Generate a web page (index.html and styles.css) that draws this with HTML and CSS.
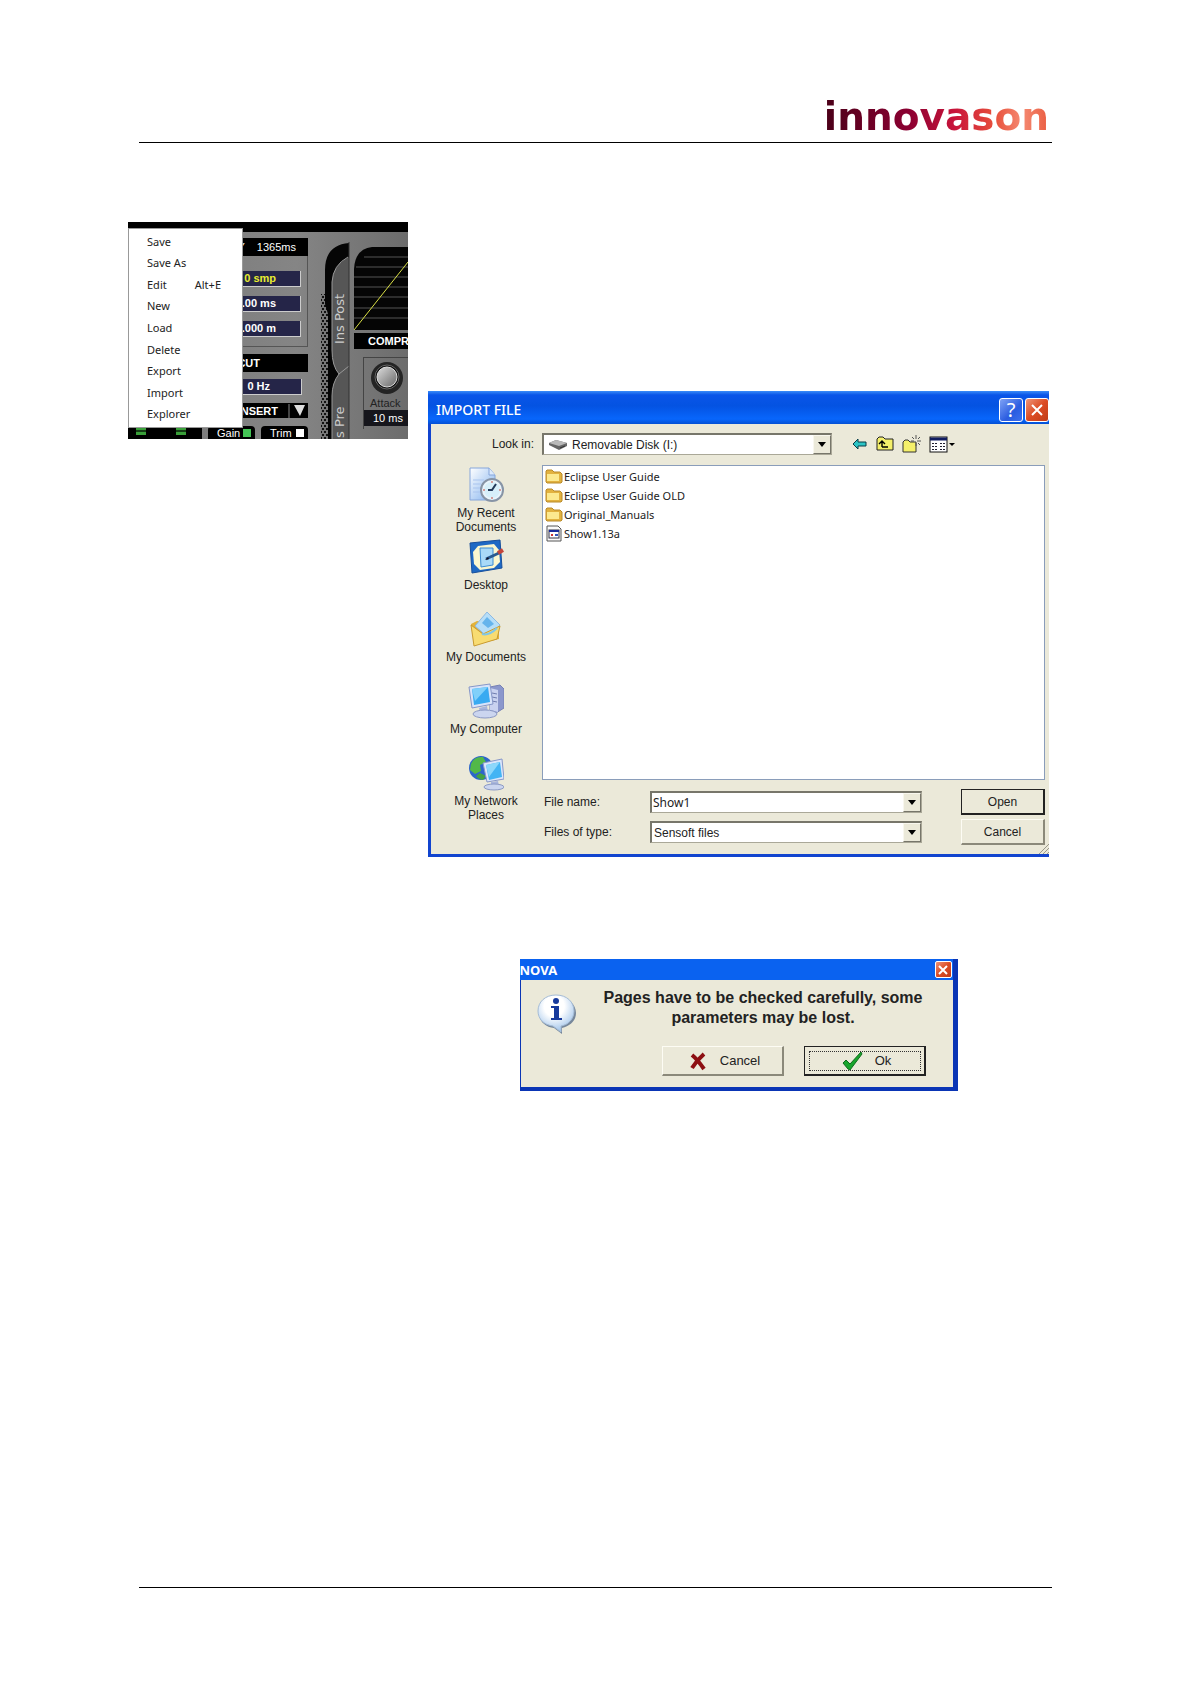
FILE: index.html
```html
<!DOCTYPE html>
<html lang="en">
<head>
<meta charset="utf-8">
<title>Innovason – Importing a show file</title>
<link rel="stylesheet" href="styles.css">
</head>
<body>
<div class="page">
  <header class="page-header"><div class="logo">innovason</div></header>

  <main class="figures">
    <section class="console" aria-label="Console file menu">
      <div class="console-top"></div>
      <div class="console-body">
        <div class="channel">
          <div class="strip strip-delay"><span>DELAY</span><span>1365ms</span></div>
          <div class="delay-box">
            <div class="value value-active">0 smp</div>
            <div class="value">00.00 ms</div>
            <div class="value">0.000 m</div>
          </div>
          <div class="strip strip-cut">CUT</div>
          <div class="cut-box"><div class="value value-hz">0 Hz</div></div>
          <div class="strip strip-insert"><span>INSERT</span>
            <svg width="20" height="14" viewBox="0 0 20 14"><path d="M3 0v14" stroke="#888"/><path d="M8 1h11l-5 11z" fill="#ddd"/></svg>
          </div>
          <div class="leds">
            <div class="meter"><i></i><i></i></div>
            <div class="led-button led-gain">Gain<b class="led led-on"></b></div>
            <div class="led-button">Trim<b class="led"></b></div>
          </div>
        </div>
        <svg class="tabs" width="46" height="207" viewBox="0 0 46 207">
          <defs><pattern id="mesh" width="4" height="6" patternUnits="userSpaceOnUse"><rect width="4" height="6" fill="#777"/><path d="M0 1h2v2H0zM2 4h2v2H2z" fill="#111"/></pattern></defs>
          <rect x="13" y="62" width="8" height="145" fill="url(#mesh)"/>
          <path d="M41 11Q17 13 17 38V72L20 82V207H41z" fill="#050505"/>
          <path d="M41 25Q25 33 24 50V118Q24 134 31 142Q24 151 24 164V207H41z" fill="#565656"/>
          <path d="M40 25Q25 33 24 50V118Q24 134 31 142Q24 151 24 164V207M31 142L41 134" fill="none" stroke="#999"/>
          <path d="M41 10V207" stroke="#333"/>
          <text transform="translate(36 112) rotate(-90)" class="tab-text">Ins Post</text>
          <text transform="translate(36 206) rotate(-90)" class="tab-text">s Pre</text>
        </svg>
        <div class="comp">
          <svg class="curve" width="54" height="83" viewBox="0 0 54 83">
            <path d="M0 83V22Q1 2 18 0H54V83z" fill="#050505"/>
            <path d="M10 10H54M2 20H54M0 30H54M0 40H54M0 50H54M0 61H54M0 71H54" stroke="#555"/>
            <path d="M0 83L54 15" stroke="#d9df45"/>
          </svg>
          <div class="strip strip-comp">COMPR</div>
          <div class="knob-box">
            <svg width="36" height="38" viewBox="0 0 36 38">
              <defs><linearGradient id="knob" x2="1" y2="1"><stop stop-color="#ddd"/><stop offset="1" stop-color="#666"/></linearGradient></defs>
              <circle cx="18" cy="20" r="16" fill="#242424"/><circle cx="18" cy="19" r="12" fill="#101010" stroke="#666"/>
              <circle cx="18" cy="19" r="10" fill="url(#knob)" stroke="#ddd"/>
            </svg>
            <div class="knob-label">Attack</div>
            <div class="knob-value">10 ms</div>
          </div>
        </div>
      </div>
      <ul class="menu">
        <li><button type="button">Save</button></li>
        <li><button type="button">Save As</button></li>
        <li><button type="button">Edit<span class="key">Alt+E</span></button></li>
        <li><button type="button">New</button></li>
        <li><button type="button">Load</button></li>
        <li><button type="button">Delete</button></li>
        <li><button type="button">Export</button></li>
        <li><button type="button">Import</button></li>
        <li><button type="button">Explorer</button></li>
      </ul>
    </section>

    <div class="dialogs">
      <section class="import" aria-label="Import file">
        <div class="import-title">
          <h1>IMPORT FILE</h1>
          <button type="button" class="caption-button help" aria-label="Help">?</button>
          <button type="button" class="caption-button close" aria-label="Close"><svg width="14" height="14" viewBox="0 0 14 14"><path d="M2 2L12 12M12 2L2 12" stroke="#fff" stroke-width="2"/></svg></button>
        </div>
        <div class="import-body">
          <label class="look-label" for="look">Look in:</label>
          <div class="look-row">
            <div class="combo combo-look">
              <svg class="disk" width="20" height="12" viewBox="0 0 20 12"><path d="M1 4L8 1L19 4V7L11 11L1 6z" fill="#666"/><path d="M1 4L8 1L19 4L11 7z" fill="#b9b9b9"/><path d="M12 9l5-2" stroke="#333"/></svg>
              <select id="look"><option>Removable Disk (I:)</option></select>
              <span class="drop"></span>
            </div>
            <div class="tools">
              <button type="button" aria-label="Back"><svg width="16" height="12" viewBox="0 0 16 12"><path d="M1 6L6 1V4H14V8H6V11z" fill="#2cc5c5" stroke="#063c46"/></svg></button>
              <button type="button" aria-label="Up one level"><svg width="18" height="16" viewBox="0 0 18 16"><path d="M1 14V3L3 1H7L9 3H17V14z" fill="#f5f06a" stroke="#222"/><path d="M6 11V6M3 8L6 5L9 8M6 11H12" fill="none" stroke="#000" stroke-width="1.4"/></svg></button>
              <button type="button" aria-label="New folder"><svg width="19" height="18" viewBox="0 0 19 18"><path d="M1 17V7L3 5H6L8 7H14V17z" fill="#f5f06a" stroke="#333"/><path d="M14 0V4M10 2L12 4M18 2L16 4M15 6H19M16 8L18 10M14 8V11M9 6H12" stroke="#555"/></svg></button>
              <button type="button" aria-label="Views"><svg width="26" height="17" viewBox="0 0 26 17"><rect x="1" y="1" width="17" height="15" fill="#fff" stroke="#111"/><path d="M1 3H18" stroke="#101c60" stroke-width="3"/><path d="M3 7.500H8M11 7.500H16M3 10.500H8M11 10.500H16M3 13.500H8M11 13.500H16" stroke="#223" stroke-dasharray="2 1"/><path d="M20 7H26L23 10z" fill="#000"/></svg></button>
            </div>
          </div>
          <nav class="places" aria-label="Places">
            <a href="#recent"><svg width="36" height="36" viewBox="0 0 36 36"><defs><linearGradient id="sheet" x2="1" y2="1"><stop stop-color="#fff"/><stop offset="1" stop-color="#7fb0ee"/></linearGradient></defs><path d="M2 1H21L27 8V33H2z" fill="url(#sheet)" stroke="#86a6da"/><path d="M21 1V8H27" fill="#dceafc" stroke="#86a6da"/><path d="M5 13H16M5 17H13M5 21H12M5 25H13" stroke="#a9c4ee"/><circle cx="24" cy="23" r="11" fill="#e9f4fb" stroke="#8794a6" stroke-width="2"/><circle cx="24" cy="23" r="8" fill="#d7effa"/><path d="M28 17L24 23H20" fill="none" stroke="#233a5a" stroke-width="2"/><path d="M24 14V16M24 30V32M15 23H17M31 23H33" stroke="#c74b3c"/></svg>My Recent<br>Documents</a>
            <a href="#desktop"><svg width="36" height="36" viewBox="0 0 36 36"><path d="M2 4L32 1L34 29L4 34z" fill="#1e69c4" stroke="#174f9c"/><path d="M10 7L26 5L31 11L32 23L26 29L12 31L6 25L5 13z" fill="#fbf7cf"/><path d="M12 9H25V26L13 28z" fill="#a9daf8" stroke="#3c8cd4"/><path d="M18 20L31 14" stroke="#295b91" stroke-width="3"/><path d="M30 14L35 11" stroke="#c4453a" stroke-width="4"/><path d="M17 21l3-3 1 2z" fill="#112"/></svg>Desktop</a>
            <a href="#documents"><svg width="36" height="36" viewBox="0 0 36 36"><path d="M3 13L9 10L31 12L31 28L6 34z" fill="#e3b33a"/><path d="M7 15L19 1L32 14L22 28z" fill="#b6def8" stroke="#8db9e2"/><path d="M14 12L19 6L26 13L20 17z" fill="#65b4ec"/><path d="M3 14L15 23L32 15L29 28L6 35z" fill="#f8dc72" stroke="#c99b31"/><path d="M14 23Q21 25 29 17" fill="none" stroke="#80c7e9" stroke-width="2"/></svg>My Documents</a>
            <a href="#computer"><svg width="36" height="36" viewBox="0 0 36 36"><path d="M22 4L32 2L36 6V25L28 30L22 27z" fill="#8b97cc" stroke="#7781b5"/><path d="M22 5L30 7V29L22 27z" fill="#c9d2f0"/><path d="M24 10l5 1M24 14l5 1M24 18l5 1" stroke="#6f7dae"/><path d="M1 4L22 1L25 21L4 25z" fill="#d8e4fa" stroke="#8797c8"/><path d="M4 6L20 4L22 19L6 22z" fill="#38aaf1"/><path d="M4 6L20 4L7 18z" fill="#80d0fa"/><path d="M11 25L19 23L20 29L12 30z" fill="#a8b5dc"/><ellipse cx="17" cy="31" rx="12" ry="4" fill="#cbd5ef" stroke="#8b99c4"/></svg>My Computer</a>
            <a href="#network"><svg width="36" height="36" viewBox="0 0 36 36"><circle cx="13" cy="13" r="12" fill="#2d66ca"/><path d="M3 9Q6 1 15 2L18 7L12 10L13 16L7 19L2 15z" fill="#52b848"/><path d="M12 18L18 21L15 25Q10 24 8 21z" fill="#43a243"/><path d="M15 8L34 4L36 24L19 27z" fill="#dbe6fb" stroke="#8797c8"/><path d="M18 10L32 7L34 22L21 25z" fill="#43b4f4"/><path d="M18 10L32 7L21 22z" fill="#8cd7fb"/><path d="M23 27L30 26L31 31H23z" fill="#a8b5dc"/><ellipse cx="26" cy="32" rx="10" ry="3" fill="#cbd5ef" stroke="#8b99c4"/></svg>My Network<br>Places</a>
          </nav>
          <ul class="files">
            <li><svg class="folder" width="18" height="15" viewBox="0 0 18 15"><path d="M1 13V2L2 1H7L9 3H15L17 5V13L16 14H2z" fill="#e2b23f" stroke="#b98a2b"/><path d="M2 5H14V12H2z" fill="#fce98f"/></svg>Eclipse User Guide</li>
            <li><svg class="folder" width="18" height="15" viewBox="0 0 18 15"><path d="M1 13V2L2 1H7L9 3H15L17 5V13L16 14H2z" fill="#e2b23f" stroke="#b98a2b"/><path d="M2 5H14V12H2z" fill="#fce98f"/></svg>Eclipse User Guide OLD</li>
            <li><svg class="folder" width="18" height="15" viewBox="0 0 18 15"><path d="M1 13V2L2 1H7L9 3H15L17 5V13L16 14H2z" fill="#e2b23f" stroke="#b98a2b"/><path d="M2 5H14V12H2z" fill="#fce98f"/></svg>Original_Manuals</li>
            <li><svg width="18" height="17" viewBox="0 0 18 17"><path d="M2 1H13L16 4V16H2z" fill="#fafafa" stroke="#555"/><rect x="4" y="5" width="10" height="8" fill="#fff" stroke="#334"/><path d="M4 6H14" stroke="#1a2b9b" stroke-width="2"/><path d="M6 9h2v2H6z" fill="#c33"/><path d="M10 9h3v2h-3z" fill="#35b"/></svg>Show1.13a</li>
          </ul>
          <form class="fields">
            <label for="filename">File name:</label>
            <div class="combo combo-name"><input id="filename" type="text" value="Show1"><span class="drop"></span></div>
            <button type="button" class="push push-default">Open</button>
            <label for="filetype">Files of type:</label>
            <div class="combo"><select id="filetype"><option>Sensoft files</option></select><span class="drop"></span></div>
            <button type="button" class="push">Cancel</button>
          </form>
          <svg class="grip" width="12" height="12" viewBox="0 0 12 12"><path d="M2 12L12 2M6 12L12 6M10 12L12 10" stroke="#9a988a"/></svg>
        </div>
      </section>

      <section class="nova" aria-label="NOVA">
        <div class="nova-title">
          <h2>NOVA</h2>
          <button type="button" class="caption-button close close-small" aria-label="Close"><svg width="12" height="12" viewBox="0 0 12 12"><path d="M2 2L10 10M10 2L2 10" stroke="#fff" stroke-width="2"/></svg></button>
        </div>
        <div class="nova-body">
          <svg class="info" width="40" height="40" viewBox="0 0 40 40">
            <defs><radialGradient id="bubble" cx=".45" cy=".3" r=".7"><stop offset=".4" stop-color="#fff"/><stop offset="1" stop-color="#9fc3ea"/></radialGradient></defs>
            <path d="M20 3C31 3 39 10 39 19C39 27 33 32 25 34V40L17 34C8 33 2 27 2 19C2 10 9 3 20 3z" fill="#76879b"/>
            <path d="M19 1C30 1 37 8 37 17C37 25 31 31 24 32V38L16 32C7 31 1 25 1 17C1 8 8 1 19 1z" fill="url(#bubble)" stroke="#a5bcd6"/>
            <circle cx="19" cy="7" r="3" fill="#173a9c"/><path d="M14 12H22V24H25V26H14V24H17V14H14z" fill="#173a9c"/>
          </svg>
          <p>Pages have to be checked carefully, some<br>parameters may be lost.</p>
          <div class="nova-buttons">
            <button type="button" class="push"><svg width="20" height="20" viewBox="0 0 20 20"><path d="M4 4Q9 8 16 18M16 3Q9 9 4 17" fill="none" stroke="#8d0f12" stroke-width="4"/></svg>Cancel</button>
            <button type="button" class="push push-default push-focus"><svg width="22" height="20" viewBox="0 0 22 20"><path d="M2 12L5 9L9 13L20 1L21 3L9 19L7 18z" fill="#18a52c" stroke="#0d6b1b"/></svg>Ok</button>
          </div>
        </div>
      </section>
    </div>
  </main>
  <footer class="page-footer"></footer>
</div>
</body>
</html>
```

FILE: styles.css
```css
* { box-sizing: border-box; }
body { margin: 0; background: #fff; color: #222; font: 12px/14px "Liberation Sans", Arial, sans-serif; }
button, input, select { font: inherit; color: inherit; }
h1, h2, p, ul { margin: 0; padding: 0; }
ul { list-style: none; }
svg { display: block; flex: none; }

.page { min-height: 100vh; display: flex; flex-direction: column; }
.page-header { height: 143px; margin: 0 139px; border-bottom: 1px solid #000; display: flex; justify-content: flex-end; align-items: flex-end; padding: 0 3px 2px; }
.logo {
  font: bold 39px/46px "DejaVu Sans", sans-serif;
  color: transparent;
  background: linear-gradient(90deg, #4a0018, #8c0032 38%, #c8143a 58%, #e8503c 76%, #f58a72 88%, #ea5c40);
  background-clip: text;
  -webkit-background-clip: text;
}
.page-footer { height: 97px; margin: auto 139px 0; border-top: 1px solid #000; }

.figures { padding: 79px 142px 0 128px; display: grid; grid-template-columns: 280px 1fr; column-gap: 20px; align-items: start; }
.dialogs { padding-top: 169px; display: flex; flex-direction: column; gap: 102px; }

/* Console screen with the file menu open */
.console { position: relative; height: 217px; overflow: hidden; background: linear-gradient(90deg, #777, #858585 60%, #6c6c6c); color: #fff; font: 11px/14px "Liberation Sans", Arial, sans-serif; }
.console-top { height: 10px; background: #000; }
.console-body { display: flex; }
.channel { width: 180px; }
.strip { background: #000; height: 18px; display: flex; align-items: center; justify-content: flex-end; }
.strip-delay { margin-top: 6px; gap: 12px; padding-right: 12px; }
.delay-box { height: 91px; margin-bottom: 7px; padding: 15px 6px 0 0; border: solid #555; border-width: 0 1px 1px 0; display: grid; grid-auto-rows: 15px; row-gap: 10px; }
.value { background: #252548; border: solid #ccc; border-width: 0 1px 1px 0; padding-right: 24px; height: 16px; text-align: right; font-weight: bold; }
.value-active { color: #e9ec30; }
.strip-cut { padding-right: 48px; font-weight: bold; }
.cut-box { padding: 7px 6px 8px 0; }
.value-hz { padding-right: 31px; }
.strip-insert { height: 15px; gap: 8px; padding-right: 2px; font-weight: bold; }
.leds { margin-top: 8px; display: flex; gap: 6px; }
.meter { width: 74px; height: 14px; background: #000; display: flex; gap: 30px; padding: 1px 0 0 8px; }
.meter i { width: 10px; height: 8px; border: solid #3aa03a; border-width: 3px 0; background: #143c14; }
.led-button { flex: 1; height: 14px; line-height: 12px; background: #000; border-radius: 4px 4px 0 0; padding: 0 4px 0 9px; display: flex; justify-content: space-between; align-items: center; }
.led { width: 8px; height: 8px; background: #fff; }
.led-on { background: #44c455; }
.tab-text { font: 13px "DejaVu Sans", sans-serif; fill: #ccc; }
.comp { flex: 1; min-width: 0; overflow: hidden; padding-top: 15px; }
.strip-comp { margin: 3px 0 8px; height: 16px; justify-content: flex-start; padding-left: 14px; font-weight: bold; }
.knob-box { margin-left: 9px; border: solid #444; border-width: 1px 0 0 1px; height: 72px; }
.knob-box svg { margin-left: 5px; }
.knob-label { color: #222; padding-left: 6px; height: 14px; font-size: 11px; }
.knob-value { background: #16161c; height: 16px; padding-left: 9px; line-height: 16px; white-space: nowrap; }
.menu { position: absolute; left: 0; top: 6px; width: 115px; height: 200px; padding: 2px 0; background: #fff; border: 1px solid #999; color: #222; display: grid; grid-template-rows: repeat(9, 1fr); }
.menu li { display: grid; }
.menu button { border: 0; background: none; padding: 0 21px 0 18px; display: flex; align-items: center; justify-content: space-between; font: 11px/16px "Noto Sans", sans-serif; }

/* Import dialog */
.import { height: 466px; display: flex; flex-direction: column; background: #ebe9d9; border: solid #1144cf; border-width: 0 0 3px 3px; }
.import-title { height: 33px; margin-left: -3px; display: flex; align-items: center; gap: 2px; background: linear-gradient(#3a8cf8, #0a55e8 12%, #0453e2 45%, #0866fc 85%, #0450d4); }
.import-title h1 { flex: 1; padding: 4px 0 0 8px; color: #fff; font: 500 14px/20px "Noto Sans", sans-serif; }
.caption-button { width: 24px; height: 24px; padding: 0; border: 1px solid #fff; border-radius: 3px; color: #fff; display: grid; place-items: center; margin-top: 4px; }
.help { background: linear-gradient(135deg, #7fa2f5, #2a5ce0 60%, #3d70ee); font: 20px/20px "Noto Sans", sans-serif; }
.close { background: linear-gradient(135deg, #ee9478, #dc4c24 50%, #c03c18); }
.import-body { position: relative; flex: 1; display: grid; grid-template-columns: 103px 1fr; grid-template-rows: 22px 316px 1fr; column-gap: 8px; padding: 9px 4px 0 0; }
.look-label { text-align: right; align-self: center; }
.look-row { display: flex; align-items: center; gap: 20px; }
.combo { display: flex; align-items: stretch; height: 22px; background: #fff; border: 1px solid #aaa898; border-top: 2px solid #77766a; border-left: 2px solid #77766a; min-width: 0; }
.combo select, .combo input { flex: 1; min-width: 0; width: 100%; border: 0; padding: 0 2px; background: transparent; appearance: none; outline: 0; }
.combo-look { width: 290px; }
.combo-look select { padding-left: 4px; }
.disk { margin: 4px 0 0 4px; }
.combo-name input { font: 12px/14px "Noto Sans", sans-serif; padding: 0 1px; }
.drop { width: 18px; flex: none; background: #ebe9d9; border: 1px solid #f8f7ee; border-right-color: #77766a; border-bottom-color: #77766a; display: grid; place-items: center; }
.drop::before { content: ""; border: 4px solid transparent; border-top: 5px solid #000; border-bottom: 0; }
.tools { display: flex; align-items: center; gap: 8px; }
.tools button { border: 0; background: none; padding: 0; }
.places { grid-row: 2 / 4; padding: 12px 0 0 7px; display: grid; grid-template-rows: repeat(5, 72px); align-content: start; }
.places a { color: inherit; text-decoration: none; text-align: center; display: flex; flex-direction: column; align-items: center; }
.places svg { margin-bottom: 3px; }
.files { margin-top: 10px; height: 315px; background: #fff; border: 1px solid #8a9dba; padding: 1px 2px; font: 11px/19px "Noto Sans", sans-serif; align-self: start; }
.files li { display: flex; align-items: center; gap: 1px; height: 19px; }
.fields { grid-column: 2; margin-top: 18px; display: grid; grid-template-columns: 100px 272px 1fr; grid-template-rows: 26px 26px; row-gap: 4px; column-gap: 8px; align-items: center; }
.fields label { padding-left: 2px; }
.fields .push { justify-self: end; }
.push { width: 84px; height: 26px; padding: 0; background: #ebe9d9; border: 1px solid #fdfcf4; border-right: 2px solid #8b897a; border-bottom: 2px solid #8b897a; }
.push-default { border: 1px solid #222; border-right: 2px solid #222; border-bottom: 2px solid #222; }
.grip { position: absolute; right: 0; bottom: 0; }

/* Warning dialog */
.nova { width: 438px; height: 132px; align-self: center; display: flex; flex-direction: column; background: #ebe9d9; border: solid #0a35b5; border-width: 0 5px 4px 1px; }
.nova-title { height: 21px; margin-left: -1px; display: flex; align-items: center; justify-content: space-between; background: #0a62f0; padding-right: 1px; }
.nova-title h2 { color: #fff; font: bold 13px/18px "Noto Sans", sans-serif; }
.close-small { width: 17px; height: 17px; border-radius: 2px; margin: 0; }
.nova-body { flex: 1; display: grid; grid-template-columns: 40px 1fr; grid-template-rows: 58px 31px; column-gap: 10px; padding: 8px 27px 0 16px; }
.info { margin-top: 6px; }
.nova-body p { padding-left: 14px; font: bold 16px/20px "Liberation Sans", sans-serif; text-align: center; white-space: nowrap; }
.nova-buttons { grid-column: 2; display: flex; justify-content: flex-end; gap: 20px; }
.nova-buttons .push { width: 122px; height: 30px; padding-left: 4px; display: flex; align-items: center; justify-content: center; gap: 12px; font-size: 13px; }
.nova-buttons .push-focus { outline: 1px dotted #333; outline-offset: -6px; }
```
